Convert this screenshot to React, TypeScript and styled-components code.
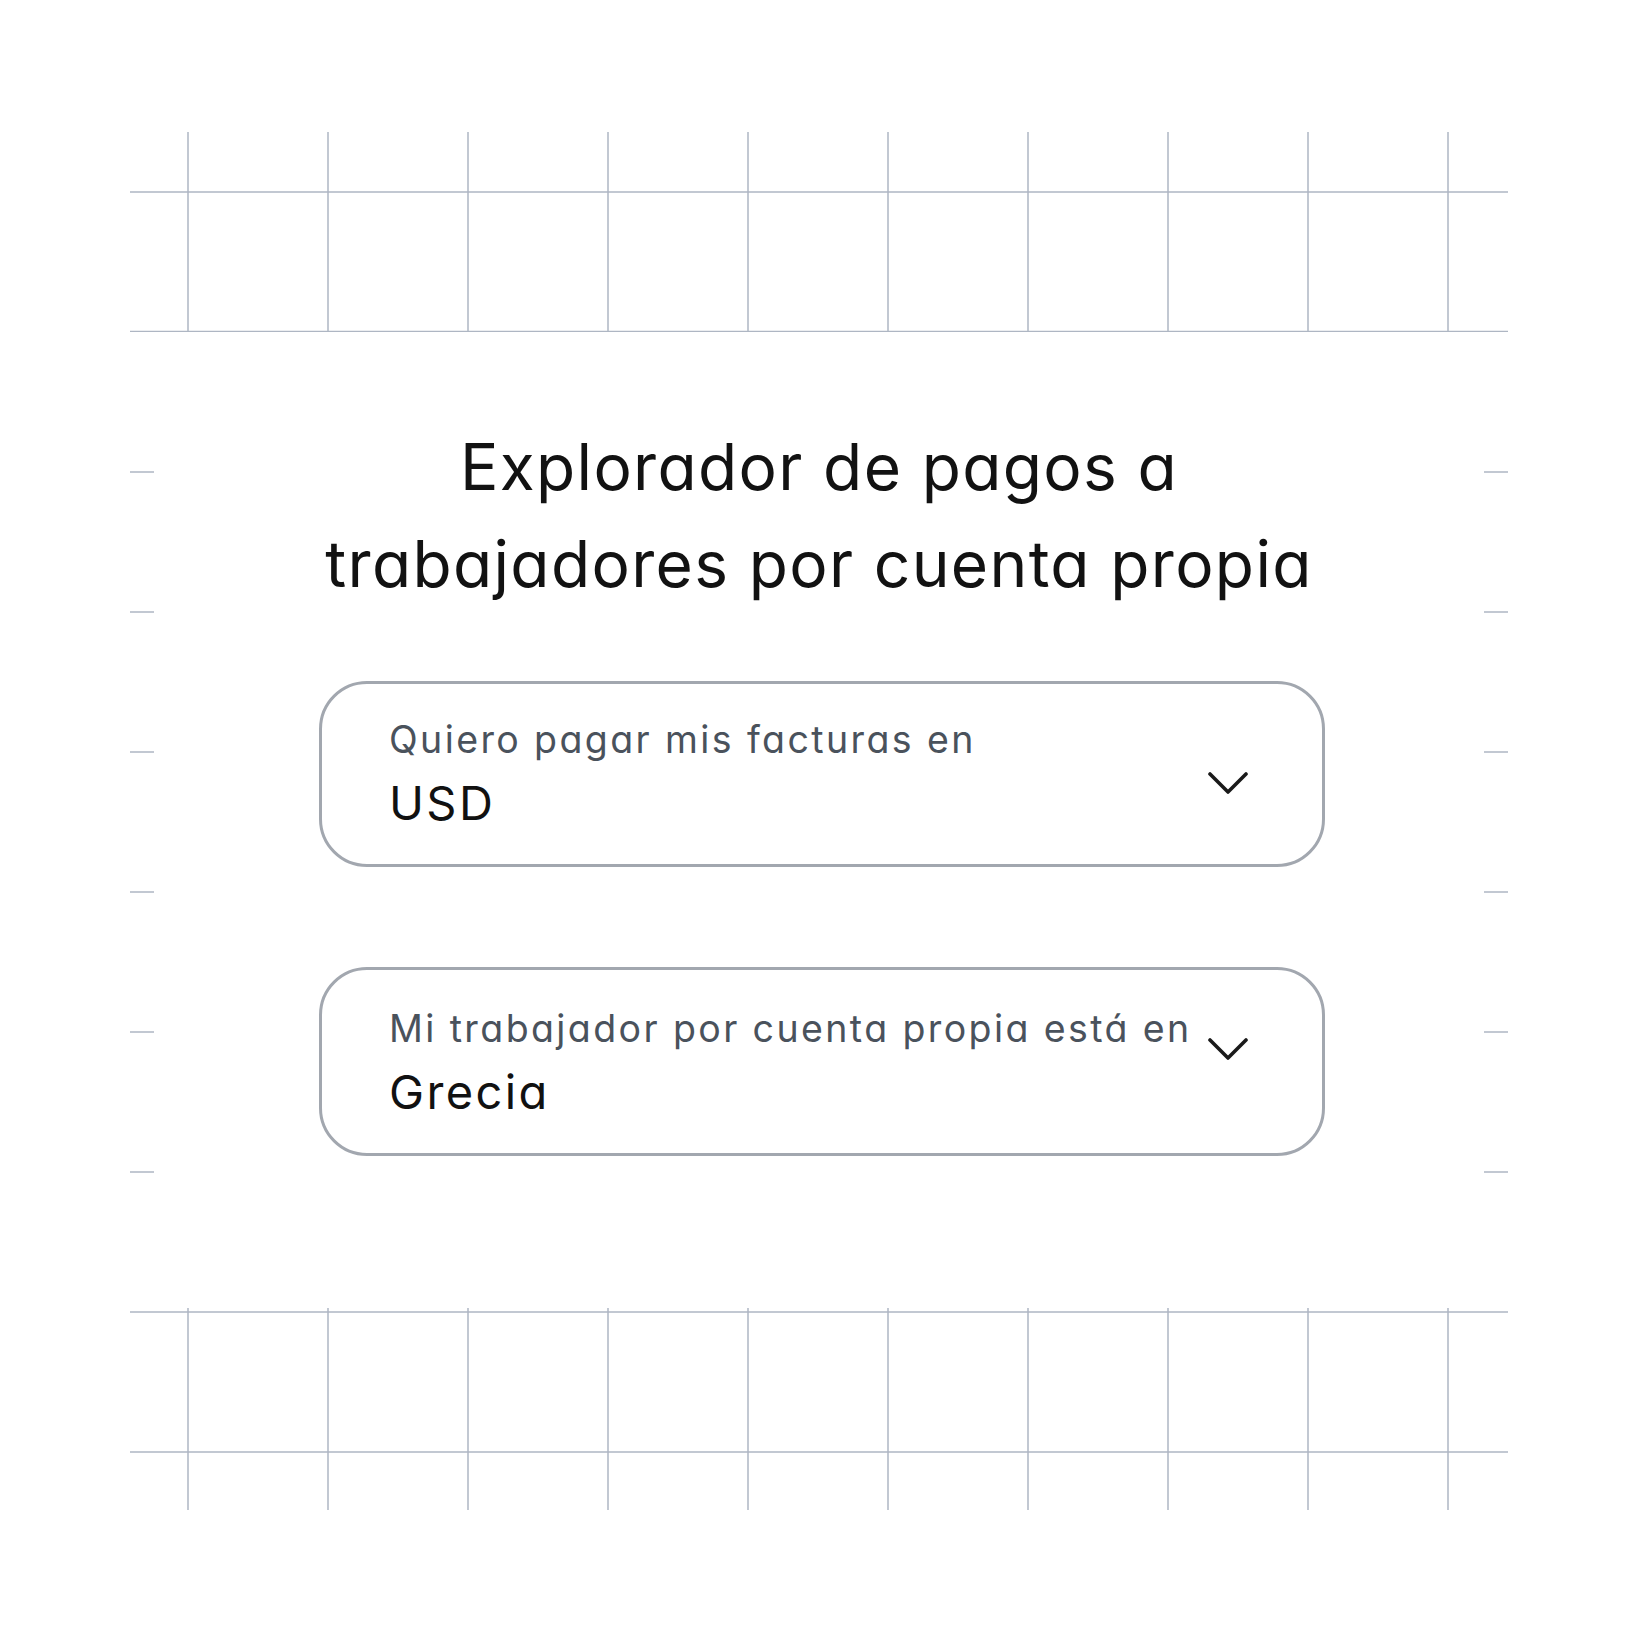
import React from 'react';
import styled, { createGlobalStyle } from 'styled-components';

const GlobalStyle = createGlobalStyle`
  html, body {
    margin: 0;
    padding: 0;
    background: #ffffff;
  }
  body {
    font-family: Inter, "Noto Sans", "Liberation Sans", sans-serif;
    font-feature-settings: "cv11" 1;
  }
`;

const LINE = '#aeb6c3';

const Page = styled.div`
  width: 1640px;
  height: 1640px;
  box-sizing: border-box;
  padding: 130px 132px 0 130px;
  background: #ffffff;
`;

const Frame = styled.div`
  width: 1378px;
  display: flex;
  flex-direction: column;
`;

const Middle = styled.div`
  height: 976px;
  display: grid;
  grid-template-columns: 24px 1fr 24px;
`;

const Content = styled.div`
  display: flex;
  flex-direction: column;
  align-items: center;
  padding-top: 86px;
`;

const Title = styled.h1`
  margin: 0;
  font-size: 64px;
  line-height: 97px;
  font-weight: 400;
  color: #121212;
  text-align: center;
  letter-spacing: 1.35px;
  white-space: nowrap;
`;

const Select = styled.div<{ $gap: number; $padTop: number }>`
  margin: ${p => p.$gap}px 0 0 6px;
  width: 1006px;
  box-sizing: border-box;
  border: 3px solid #a2a7af;
  border-radius: 48px;
  padding: ${p => p.$padTop}px 74px 31px 67px;
  display: flex;
  justify-content: space-between;
  align-items: flex-start;
  background: #ffffff;
`;

const Texts = styled.div`
  display: flex;
  flex-direction: column;
  gap: 9px;
`;

const Label = styled.div`
  font-size: 37.5px;
  line-height: 48px;
  color: #4a525c;
  letter-spacing: 2.4px;
  white-space: nowrap;
`;

const Value = styled.div`
  font-size: 47px;
  line-height: 60px;
  color: #111111;
  letter-spacing: 2.4px;
`;

const Chevron = styled.svg<{ $top: number }>`
  margin-top: ${p => p.$top}px;
  flex: none;
`;

const GridBand: React.FC<{ variant: 'top' | 'bottom' }> = ({ variant }) => {
  const xs = Array.from({ length: 10 }, (_, i) => 58 + i * 140);
  const rows = variant === 'top' ? [62, 201.5] : [4, 144];
  const vTop = variant === 'top' ? 2 : 0;
  return (
    <svg width="1378" height="202" style={{ display: 'block' }}>
      {rows.map(y => (
        <line key={y} x1="0" x2="1378" y1={y} y2={y} stroke={LINE} strokeWidth="1.5" />
      ))}
      {xs.map(x => (
        <line key={x} x1={x} x2={x} y1={vTop} y2="202" stroke={LINE} strokeWidth="1.5" />
      ))}
    </svg>
  );
};

const Ticks: React.FC = () => (
  <svg width="24" height="976" style={{ display: 'block' }}>
    {[140, 280, 420, 560, 700, 840].map(y => (
      <line key={y} x1="0" x2="24" y1={y} y2={y} stroke={LINE} strokeWidth="1.5" />
    ))}
  </svg>
);

const ChevronIcon: React.FC<{ top: number }> = ({ top }) => (
  <Chevron $top={top} width="40" height="23" viewBox="0 0 40 23">
    <path d="M2 2 L20 20 L38 2" fill="none" stroke="#1a1a1a" strokeWidth="3.6" strokeLinecap="round" strokeLinejoin="round" />
  </Chevron>
);

const fields = [
  { label: 'Quiero pagar mis facturas en', value: 'USD', gap: 69, padTop: 32, chevron: 56 },
  { label: 'Mi trabajador por cuenta propia está en', value: 'Grecia', gap: 100, padTop: 35, chevron: 33 },
];

const App: React.FC = () => (
  <>
    <GlobalStyle />
    <Page>
      <Frame>
        <GridBand variant="top" />
        <Middle>
          <Ticks />
          <Content>
            <Title>
              Explorador de pagos a
              <br />
              trabajadores por cuenta propia
            </Title>
            {fields.map(f => (
              <Select key={f.value} $gap={f.gap} $padTop={f.padTop}>
                <Texts>
                  <Label>{f.label}</Label>
                  <Value>{f.value}</Value>
                </Texts>
                <ChevronIcon top={f.chevron} />
              </Select>
            ))}
          </Content>
          <Ticks />
        </Middle>
        <GridBand variant="bottom" />
      </Frame>
    </Page>
  </>
);

export default App;
